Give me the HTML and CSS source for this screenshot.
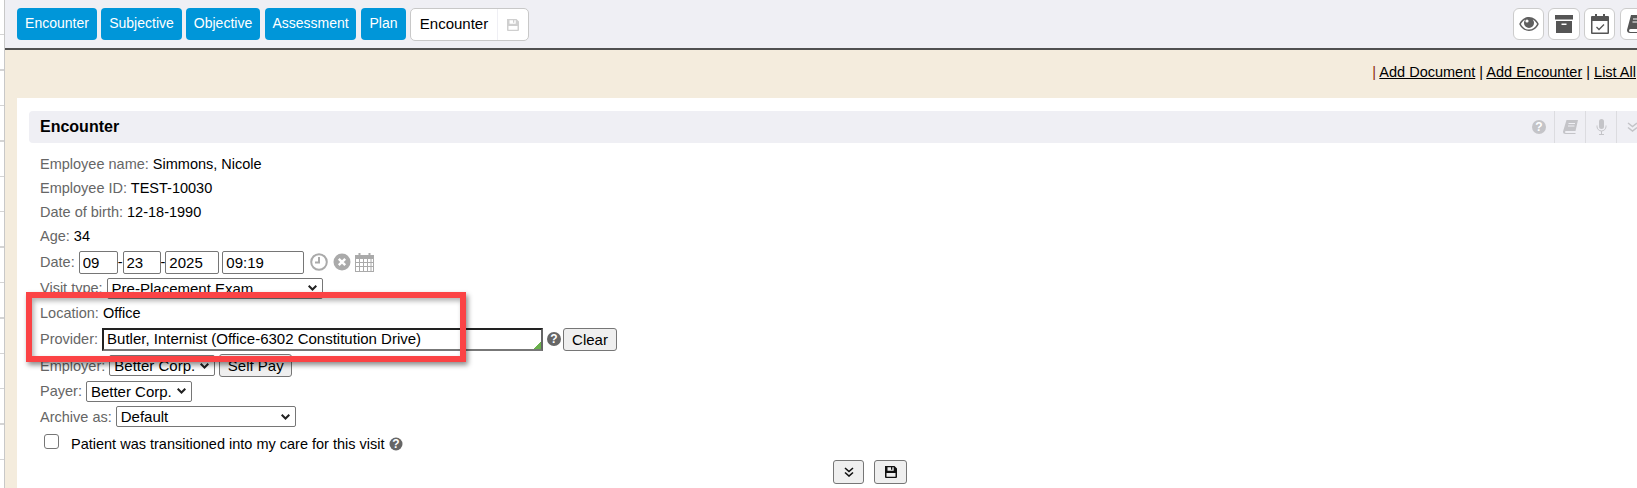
FILE: index.html
```html
<!DOCTYPE html>
<html lang="en">
<head>
  <meta charset="UTF-8" />
  <title>Encounter</title>
  <link rel="stylesheet" href="styles.css">
</head>
<body>
  <div class="sheet-edge"></div>

  <div class="page">
    <div class="toolbar">
      <div class="toolbar-left">
        <a class="nav-btn btn-encounter">Encounter</a>
        <a class="nav-btn btn-subjective">Subjective</a>
        <a class="nav-btn btn-objective">Objective</a>
        <a class="nav-btn btn-assessment">Assessment</a>
        <a class="nav-btn btn-plan">Plan</a>
        <div class="tab-box">
          <span class="tab-name">Encounter</span>
          <span class="tab-save">
            <svg width="14" height="14" viewBox="0 0 14 14"><path fill="#cfcfcf" fill-rule="evenodd" d="M1 1h9.500L13 3.500V12a1 1 0 0 1-1 1H2a1 1 0 0 1-1-1zm2.500 1.200v3.500h6.200V2.200H8.300v2.500H7V2.200zM2.500 8v3.700h9V8z"/></svg>
          </span>
        </div>
      </div>
      <div class="toolbar-right">
        <span class="tool-btn tool-eye">
          <svg width="20" height="14" viewBox="0 0 20 14"><path fill="#5f5f5f" d="M10 0C5.500 0 2 3 .2 7 2 11 5.500 14 10 14s8-3 9.800-7C18 3 14.500 0 10 0zm0 12.600C6.400 12.600 3.500 10.300 1.900 7c1-2 2.500-3.600 4.400-4.600A5.200 5.200 0 0 0 5 6a5 5 0 0 0 10 0 5.200 5.200 0 0 0-1.300-3.600c1.900 1 3.400 2.600 4.400 4.600-1.600 3.300-4.500 5.600-8.100 5.600z"/><circle cx="8" cy="4" r="1.600" fill="#fff"/></svg>
        </span>
        <span class="tool-btn tool-archive">
          <svg width="18" height="18" viewBox="0 0 18 18"><path fill="#555" fill-rule="evenodd" d="M0 0h18v4.500H0zM1 6h16v12H1zm5.500 2.500v1.500h5V8.500z"/></svg>
        </span>
        <span class="tool-btn tool-calendar">
          <svg width="18" height="20" viewBox="0 0 18 20"><path fill="#555" fill-rule="evenodd" d="M4 0h2v2h6V0h2v2h3a1 1 0 0 1 1 1v16a1 1 0 0 1-1 1H1a1 1 0 0 1-1-1V3a1 1 0 0 1 1-1h3zM1.500 7v11.500h15V7z"/><path fill="none" stroke="#555" stroke-width="1.300" d="M5.500 13l2.500 2.500L13 10.500"/></svg>
        </span>
        <span class="tool-btn tool-book">
          <svg width="18" height="18" viewBox="0 0 18 18"><path fill="#555" d="M4 0h14l-3 14H3.500a1.500 1.500 0 0 0 0 3H15v1H3a3 3 0 0 1-3-3z"/><path stroke="#fff" d="M6 4h8M5.500 7h8"/></svg>
        </span>
      </div>
    </div>

    <div class="link-row">
      <span class="pipe-first">|</span> <a>Add Document</a> | <a>Add Encounter</a> | <a>List All</a>
    </div>

    <div class="panel">
      <div class="section-head">
        <h2>Encounter</h2>
        <div class="head-icons">
          <span class="head-icon">
            <svg width="14" height="14" viewBox="0 0 14 14"><circle cx="7" cy="7" r="7" fill="#c4c4c8"/><text x="7" y="11" class="q-mark">?</text></svg>
          </span>
          <span class="head-icon">
            <svg width="15" height="14" viewBox="0 0 15 14"><path fill="#c4c4c8" d="M3.500 0H15l-2.500 11H3a1 1 0 0 0 0 2h9.500v1H2.500A2.500 2.500 0 0 1 0 11.500z"/><path stroke="#efeff4" d="M5.500 3.500h6.500M5 6h6.500"/></svg>
          </span>
          <span class="head-icon">
            <svg width="11" height="16" viewBox="0 0 11 16"><rect x="3" y="0" width="5" height="10" rx="2.500" fill="#c4c4c8"/><path fill="none" stroke="#c4c4c8" d="M1 6.500v1a4.500 4.500 0 0 0 9 0v-1M5.500 12v3M3 15.500h5"/></svg>
          </span>
          <span class="head-icon">
            <svg width="11" height="10" viewBox="0 0 11 10"><path fill="none" stroke="#c4c4c8" stroke-width="1.500" d="M1 1l4.500 3.500L10 1M1 5.500L5.500 9 10 5.500"/></svg>
          </span>
        </div>
      </div>

      <div class="form">
        <div class="row"><label>Employee name:</label> Simmons, Nicole</div>
        <div class="row"><label>Employee ID:</label> TEST-10030</div>
        <div class="row"><label>Date of birth:</label> 12-18-1990</div>
        <div class="row"><label>Age:</label> 34</div>
        <div class="row row-date">
          <label>Date:</label>
          <input class="field w-mm" value="09"><span>-</span><input class="field w-dd" value="23"><span>-</span><input class="field w-yy" value="2025">
          <input class="field w-time" value="09:19">
          <svg class="icon-clock" width="18" height="18" viewBox="0 0 18 18"><circle cx="9" cy="9" r="7.800" fill="none" stroke="#aaa" stroke-width="2"/><path fill="none" stroke="#aaa" stroke-width="2" d="M9 4v5.500H5"/></svg>
          <svg class="icon-clear" width="18" height="18" viewBox="0 0 18 18"><circle cx="9" cy="9" r="8.500" fill="#aaa"/><path stroke="#fff" stroke-width="2.400" d="M5.800 5.800l6.400 6.400M12.200 5.800l-6.400 6.400"/></svg>
          <svg class="icon-cal" width="19" height="19" viewBox="0 0 19 19"><path fill="#aaa" fill-rule="evenodd" d="M3.500 0h2v2h8V0h2v2H19v17H0V2h3.500zM1 6v12h17V6z"/><path stroke="#aaa" d="M4.500 6v12M8.500 6v12M12.500 6v12M16 6v12M1 9.500h17M1 13.500h17"/></svg>
        </div>
        <div class="row row-visit">
          <label>Visit type:</label>
          <select class="pick w-visit"><option>Pre-Placement Exam</option></select>
        </div>
        <div class="row row-location"><label>Location:</label> Office</div>
        <div class="row row-provider">
          <label>Provider:</label>
          <span class="provider-box">Butler, Internist (Office-6302 Constitution Drive)</span>
          <svg class="help" width="14" height="14" viewBox="0 0 14 14"><circle cx="7" cy="7" r="7" fill="#666"/><text x="7" y="11" class="q-mark">?</text></svg>
          <button class="plain-btn btn-clear">Clear</button>
        </div>
        <div class="row row-employer">
          <label>Employer:</label>
          <select class="pick w-corp"><option>Better Corp.</option></select>
          <button class="plain-btn btn-self">Self Pay</button>
        </div>
        <div class="row row-payer">
          <label>Payer:</label>
          <select class="pick w-corp"><option>Better Corp.</option></select>
        </div>
        <div class="row row-archive">
          <label>Archive as:</label>
          <select class="pick w-archive"><option>Default</option></select>
        </div>
        <div class="row row-check">
          <span class="check"></span>
          <span>Patient was transitioned into my care for this visit</span>
          <svg class="help-small" width="14" height="14" viewBox="0 0 14 14"><circle cx="7" cy="7" r="6.500" fill="#666"/><text x="7" y="11" class="q-mark">?</text></svg>
        </div>
        <div class="form-actions">
          <button class="icon-btn btn-down">
            <svg width="10" height="10" viewBox="0 0 10 10"><path fill="none" stroke="#111" stroke-width="1.600" d="M1 1l4 3.500L9 1M1 5.500L5 9l4-3.500"/></svg>
          </button>
          <button class="icon-btn btn-save">
            <svg width="14" height="14" viewBox="0 0 14 14"><path fill="#111" fill-rule="evenodd" d="M1 1h9.500L13 3.500V12a1 1 0 0 1-1 1H2a1 1 0 0 1-1-1zm2.500 1.200v3.500h6.200V2.200H8.300v2.500H7V2.200zM2.500 8v3.700h9V8z"/></svg>
          </button>
        </div>
      </div>
    </div>
  </div>

  <div class="callout"></div>
</body>
</html>
```

FILE: styles.css
```css
html, body {
  height: 100%;
}

body {
  font-family: "Liberation Sans", Arial, sans-serif;
  font-size: 14.5px;
  color: #000;
  background-color: #fff;
  margin: 0;
  padding: 0;
  overflow: hidden;
  display: flex;
}

/* bit of the spreadsheet showing behind the window */
.sheet-edge {
  flex: 0 0 4px;
  border-right: 1px solid #c8c8c8;
  background: repeating-linear-gradient(to bottom, #fff 0, #fff 34px, #d4d4d4 34px, #d4d4d4 35.4px);
}

/* the app is wider than the window, its right side gets cut off */
.page {
  flex: 0 0 1695px;
  background-color: #f4ecdd;
}

/* TOP BAR */
.toolbar {
  height: 48px;
  background-color: #efeff4;
  border-bottom: 2px solid #505050;
  display: flex;
  justify-content: space-between;
  align-items: flex-start;
  padding: 0 12px;
}

.toolbar-left {
  display: flex;
  align-items: flex-start;
  gap: 4px;
  padding-top: 8px;
}

.nav-btn {
  height: 32px;
  line-height: 30px;
  background-color: #0096d9;
  color: white;
  border-radius: 4px;
  text-align: center;
  font-size: 14px;
}

.btn-encounter { width: 80px; }
.btn-subjective { width: 81px; }
.btn-objective { width: 74px; }
.btn-assessment { width: 91px; margin-left: 1px; }
.btn-plan { width: 45px; margin-left: 1px; }

.tab-box {
  display: flex;
  height: 33px;
  width: 119px;
  box-sizing: border-box;
  background: white;
  border: 1px solid #c8c8c8;
  border-radius: 5px;
}

.tab-name {
  width: 86px;
  line-height: 30px;
  text-align: center;
  font-size: 15px;
  border-right: 1px solid #efeff4;
}

.tab-save {
  flex: 1;
  display: flex;
  align-items: center;
  justify-content: center;
}

.toolbar-right {
  display: flex;
  gap: 4px;
  padding-top: 8px;
  margin-right: 37px;
}

.tool-btn {
  height: 32px;
  background: white;
  border: 1px solid #ccc;
  border-radius: 6px;
  display: flex;
  align-items: center;
  justify-content: center;
  box-sizing: border-box;
}

.tool-eye { width: 31px; }
.tool-archive { width: 32px; }
.tool-calendar { width: 31px; }
.tool-book { width: 31px; margin-left: 1px; }

/* LINKS */
.link-row {
  height: 48px;
  line-height: 44px;
  text-align: right;
  padding-right: 64px;
}

.link-row a {
  text-decoration: underline;
}

.pipe-first {
  color: #8a2a10;
}

/* PANEL */
.panel {
  margin-left: 12px;
  background-color: white;
  padding: 13px 0 0 12px;
  height: 400px;
  box-sizing: border-box;
}

.section-head {
  height: 32px;
  background-color: #efeff4;
  border-radius: 4px 0 0 4px;
  display: flex;
  align-items: center;
  justify-content: space-between;
}

.section-head h2 {
  margin: 0 0 0 11px;
  font-size: 16px;
}

.head-icons {
  display: flex;
  height: 100%;
  margin-right: 52px;
}

.head-icon {
  width: 31px;
  display: flex;
  align-items: center;
  justify-content: center;
  border-right: 1px solid #dcdce0;
  box-sizing: border-box;
}

.q-mark {
  font-family: "Liberation Sans", Arial, sans-serif;
  font-size: 12px;
  font-weight: bold;
  fill: white;
  text-anchor: middle;
}

.form {
  padding: 9px 0 0 11px;
}

.row {
  height: 24px;
  line-height: 24px;
  white-space: nowrap;
}

.row label {
  color: #666;
}

.row-date,
.row-visit,
.row-provider,
.row-employer,
.row-payer,
.row-archive,
.row-check {
  display: flex;
  align-items: center;
}

.row-date label,
.row-visit label,
.row-provider label,
.row-employer label,
.row-payer label,
.row-archive label {
  margin-right: 4px;
}

.row-date { height: 28px; }
.row-visit { height: 24px; }
.row-location { height: 26px; line-height: 26px; }
.row-provider { height: 26px; }
.row-employer { height: 27px; }
.row-payer { height: 24px; }
.row-archive { height: 27px; }
.row-check { height: 28px; }

.field {
  font: 15px "Liberation Sans", Arial, sans-serif;
  height: 23px;
  box-sizing: border-box;
  border: 1px solid #767676;
  border-radius: 2px;
  padding: 1px 3px;
  margin: 0;
  background: white;
}

.w-mm { width: 39px; }
.w-dd { width: 38px; }
.w-yy { width: 54px; }
.w-time { width: 82px; margin-left: 3px; }

.icon-clock { margin-left: 6px; }
.icon-clear { margin-left: 5px; }
.icon-cal { margin-left: 4px; }

.pick {
  font: 15px "Liberation Sans", Arial, sans-serif;
  height: 21px;
  box-sizing: border-box;
  border: 1px solid #767676;
  border-radius: 2px;
  background: white url("data:image/svg+xml,%3Csvg xmlns='http://www.w3.org/2000/svg' width='9' height='6'%3E%3Cpath fill='none' stroke='%23222' stroke-width='2' d='M.7.7l3.800 3.800L8.300.7'/%3E%3C/svg%3E") no-repeat right 5px center;
  appearance: none;
  margin: 0;
  padding: 0 0 0 4px;
}

.w-visit { width: 216px; }
.w-corp { width: 106px; }
.w-archive { width: 180px; }

.provider-box {
  width: 441px;
  height: 23px;
  line-height: 18px;
  box-sizing: border-box;
  border-style: solid;
  border-width: 2px;
  border-color: #222 #666 #777 #222;
  padding-left: 3px;
  font-size: 15px;
  background: linear-gradient(135deg, transparent 0, transparent calc(100% - 5px), #6ab04c calc(100% - 5px));
}

.help { margin-left: 4px; }

.plain-btn {
  font: 15px "Liberation Sans", Arial, sans-serif;
  height: 23px;
  box-sizing: border-box;
  background-color: #efefef;
  border: 1px solid #767676;
  border-radius: 3px;
  padding: 0;
  margin: 0;
}

.btn-clear {
  width: 54px;
  margin-left: 2px;
}

.btn-self {
  width: 73px;
  margin-left: 4px;
}

.check {
  width: 15px;
  height: 15px;
  border: 1px solid #767676;
  border-radius: 3px;
  box-sizing: border-box;
  margin: 0 12px 5px 4px;
  background: white;
}

.help-small { margin-left: 4px; }

.form-actions {
  display: flex;
  justify-content: center;
  gap: 10px;
  padding-top: 2px;
}

.icon-btn {
  height: 24px;
  background-color: #efefef;
  border: 1px solid #767676;
  border-radius: 3px;
  padding: 0;
  margin: 0;
  display: flex;
  align-items: center;
  justify-content: center;
}

.btn-down { width: 31px; }
.btn-save { width: 33px; }

/* red annotation drawn over the screenshot */
.callout {
  position: absolute;
  left: 26px;
  top: 292px;
  width: 440px;
  height: 70px;
  box-sizing: border-box;
  border: 6px solid #fb4345;
  box-shadow: 2px 3px 5px rgba(0,0,0,0.45), inset 2px 3px 5px rgba(0,0,0,0.3);
}
```
